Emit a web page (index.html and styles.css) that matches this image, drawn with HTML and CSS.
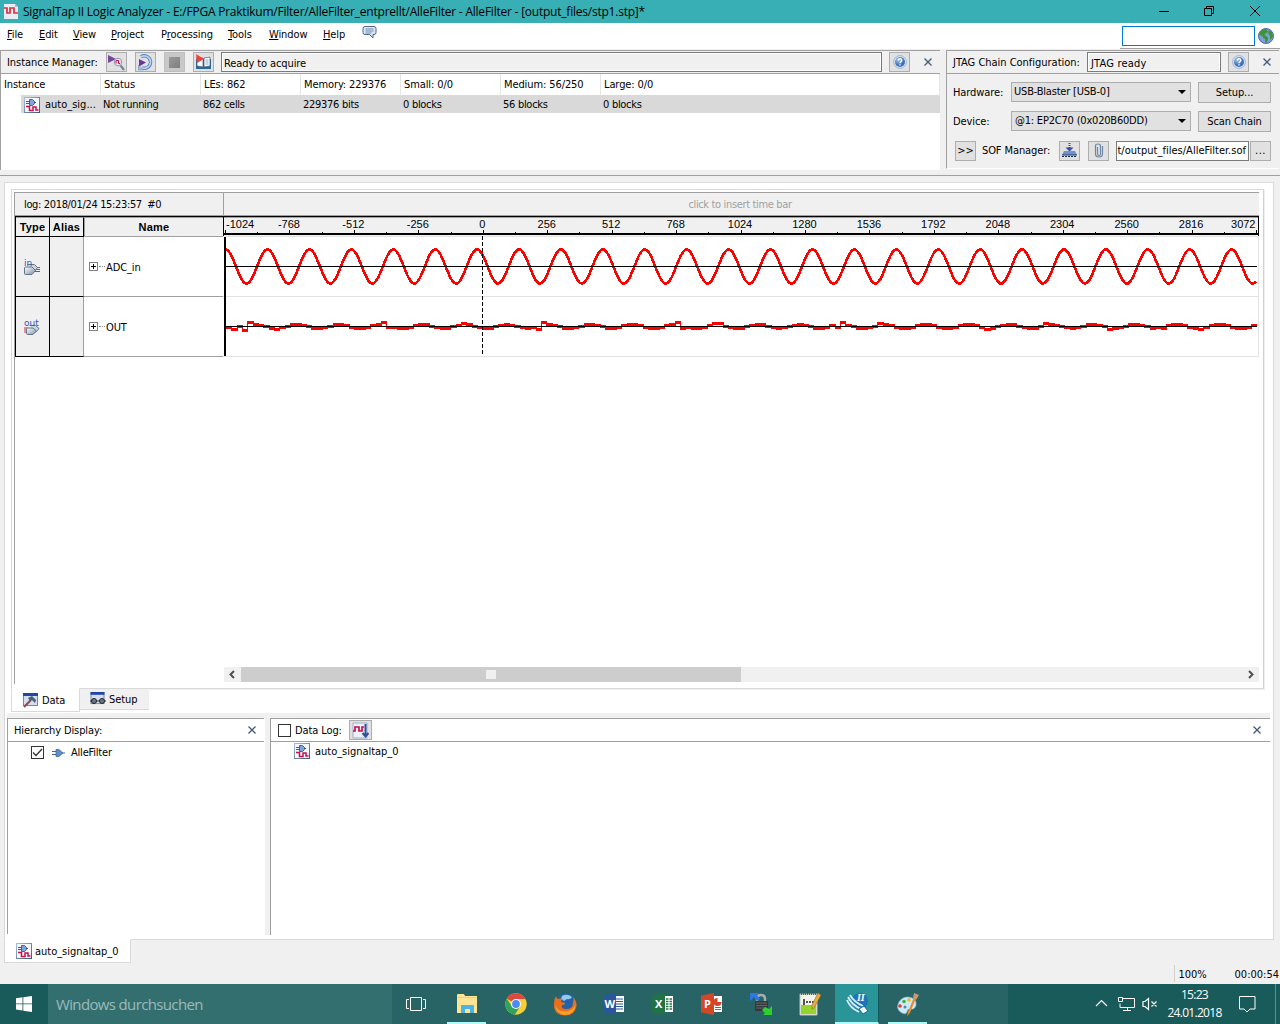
FILE: index.html
```html
<!DOCTYPE html>
<html lang="en">
<head>
<meta charset="utf-8">
<title>SignalTap II Logic Analyzer</title>
<link rel="stylesheet" href="styles.css">
</head>
<body>
<svg class="defs" width="0" height="0">
  <defs>
    <linearGradient id="metal" x1="0" y1="0" x2="1" y2="1"><stop offset="0" stop-color="#fff"/><stop offset="1" stop-color="#7d8ea3"/></linearGradient>
    <linearGradient id="frame" x1="0" y1="0" x2="1" y2="1"><stop offset="0" stop-color="#a5bfdf"/><stop offset="1" stop-color="#3f5878"/></linearGradient>
    <radialGradient id="ball" cx=".35" cy=".3"><stop offset="0" stop-color="#a9c8ea"/><stop offset="1" stop-color="#3f72b8"/></radialGradient>
    <symbol id="tap" viewBox="0 0 16 16"><rect x=".5" y=".5" width="15" height="15" fill="#f4f7fb" stroke="url(#frame)"/><path d="M2 4.500h4M2 6.500h4M10 5.500h2" stroke="#3559a8"/><path d="M5.500 2.500h3l2 2v2l-2 2h-3z" fill="#7fa3df" stroke="#27498f" stroke-width=".8"/><path d="M2 9.500h3.500v4H9v-3.500h3v3h2.500" fill="none" stroke="#c8104c" stroke-width="1.500"/></symbol>
    <symbol id="help" viewBox="0 0 14 14"><circle cx="7" cy="7" r="6.400" fill="#dbe7f5" stroke="#8aa9d0" stroke-width=".8"/><circle cx="7" cy="7" r="5" fill="url(#ball)"/><path d="M5.200 5.500c0-2.400 3.700-2.200 3.600 0C8.700 6.800 7 6.700 7 8.200M7 9.200v1.400" fill="none" stroke="#fff" stroke-width="1.400"/></symbol>
    <symbol id="close" viewBox="0 0 8 8"><path d="M.5.5l7 7M7.500.5l-7 7" fill="none" stroke="#42597a" stroke-width="1.300"/></symbol>
    <symbol id="win" viewBox="0 0 15 14"><rect x=".5" y=".5" width="14" height="12" fill="#d3def0" stroke="#6d87b8"/><path d="M0 0h15v3H0z" fill="#2347a0"/></symbol>
  </defs>
</svg>

<header class="titlebar">
  <svg class="app-icon" width="14" height="15" viewBox="0 0 14 15"><path d="M0 0h11l3 3v12H0z" fill="#e9ecf5"/><path d="M11 0v3h3z" fill="#aab4d0"/><path d="M0 4h3v5h3V4h4v5h4" fill="none" stroke="#e0313d" stroke-width="1.700"/></svg>
  <span class="title">SignalTap II Logic Analyzer - E:/FPGA Praktikum/Filter/AlleFilter_entprellt/AlleFilter - AlleFilter - [output_files/stp1.stp]*</span>
  <svg class="win-controls" width="104" height="12" viewBox="0 0 104 12" fill="none" stroke="#000"><path d="M0 6.500h10M45.500 3.500h7v7h-7zM47.500 3v-1.500h7v7H53M91 1l10 10M101 1L91 11"/></svg>
</header>

<nav class="menubar">
  <span class="m1"><u>F</u>ile</span><span class="m2"><u>E</u>dit</span><span class="m3"><u>V</u>iew</span><span class="m4"><u>P</u>roject</span><span class="m5">P<u>r</u>ocessing</span><span class="m6"><u>T</u>ools</span><span class="m7"><u>W</u>indow</span><span class="m8"><u>H</u>elp</span>
  <svg class="bubble" width="15" height="13" viewBox="0 0 15 13"><path d="M3 .5h9q2 0 2 2v4q0 2-2 2h-1v3.500L7.500 8.500H3q-2 0-2-2v-4q0-2 2-2z" fill="#dce8f8" stroke="#4a648c"/><path d="M3.500 3h8M3.500 5h8M3.500 7h6" stroke="#54709b" stroke-width=".8"/></svg>
  <div class="search"><div class="search-box"></div>
    <svg width="16" height="16" viewBox="0 0 16 16"><circle cx="8" cy="8" r="7.500" fill="#7ba0dc" stroke="#4a66a5"/><path d="M8 1C4 1 2 4 1.200 7l3 1 1 2 2 1 0 4 2-1 1-4-2-2-2-1 2-2 2-1zM11 2l-1 3 2 3 0 4 2-2 1-3-1-3z" fill="#3f9435"/></svg></div>
</nav>

<section class="docks">
  <div class="instance-dock">
    <div class="dock-head">
      <span class="lbl-im">Instance Manager:</span>
      <button class="tool"><svg width="17" height="17" viewBox="0 0 17 17"><path d="M0 1l8 4-8 4z" fill="#7545a0"/><circle cx="10" cy="8" r="3.800" fill="#f3dfe6" stroke="#8a9db3"/><path d="M8 9.500V6.500h2.500v3H12" fill="none" stroke="#c8104c"/><path d="M12.500 11.500l3.500 4.500" stroke="#73849c" stroke-width="2.200"/></svg></button>
      <button class="tool"><svg width="17" height="17" viewBox="0 0 17 17"><path d="M4 2.800a6.200 6.200 0 1 1 1 11" fill="none" stroke="#5980b9" stroke-width="3.400"/><path d="M4 2.800a6.200 6.200 0 1 1 1 11" fill="none" stroke="#b4d2f2" stroke-width="1.800"/><path d="M2 5l7 3.500-7 4z" fill="#6b3699"/><path d="M1.500 11v5h5z" fill="#9fc1ea" stroke="#5980b9" stroke-width=".5"/></svg></button>
      <button class="tool off"><i class="stop"></i></button>
      <button class="tool"><svg width="17" height="17" viewBox="0 0 17 17"><path d="M1 5h15v10H1z" fill="#27699b"/><path d="M2 3l6 1v9l-6-1zM9 4l6-1v9l-6 1z" fill="#fff" stroke="#335a80" stroke-width=".7"/><path d="M10.500 6h3M10.500 8h3M10.500 10h3" stroke="#8ba3bb"/><path d="M1 0l8 5-7 4z" fill="#f14242"/></svg></button>
      <div class="status-box">Ready to acquire</div>
      <button class="tool help"><svg width="14" height="14"><use href="#help"/></svg></button>
      <svg class="x" width="8" height="8"><use href="#close"/></svg>
    </div>
    <div class="inst-row inst-cols"><span>Instance</span><span>Status</span><span>LEs: 862</span><span>Memory: 229376</span><span>Small: 0/0</span><span>Medium: 56/250</span><span>Large: 0/0</span></div>
    <div class="inst-row inst-data"><span class="inst-name"><svg width="16" height="16"><use href="#tap"/></svg>auto_sig...</span><span>Not running</span><span>862 cells</span><span>229376 bits</span><span>0 blocks</span><span>56 blocks</span><span>0 blocks</span></div>
  </div>
  <div class="jtag-dock">
    <div class="dock-head">
      <span class="lbl-jtag">JTAG Chain Configuration:</span>
      <div class="status-box">JTAG ready</div>
      <button class="tool help"><svg width="14" height="14"><use href="#help"/></svg></button>
      <svg class="x" width="8" height="8"><use href="#close"/></svg>
    </div>
    <div class="jrow r1"><span class="jl">Hardware:</span><div class="combo">USB-Blaster [USB-0]<i></i></div><button class="btn">Setup...</button></div>
    <div class="jrow r2"><span class="jl">Device:</span><div class="combo dev">@1: EP2C70 (0x020B60DD)<i></i></div><button class="btn">Scan Chain</button></div>
    <div class="jrow r3"><button class="sq more">&gt;&gt;</button><span class="sof">SOF Manager:</span>
      <button class="sq"><svg width="17" height="17" viewBox="0 0 17 17"><path d="M8.500 1v6" stroke="#3448b0" stroke-width="2" stroke-dasharray="1 1"/><path d="M4.500 5.500h8l-4 4z" fill="#3448b0"/><path d="M3 9h11l2 4H1z" fill="#6f92c8"/><path d="M1 13h15" stroke="#263f6b"/><path d="M1 14.500h15" stroke="#1b2c46" stroke-dasharray="2 1"/></svg></button>
      <button class="sq clip"><svg width="10" height="15" viewBox="0 0 10 15" fill="none" stroke="#6c86a8" stroke-width="1.200"><path d="M3.500 4v7q0 1.500 1.500 1.500T6.500 11V3Q6.500 1 4 1T1.500 3v8q0 3 3.500 3t3.500-3V3"/></svg></button>
      <div class="sof-file"><span>t/output_files/AlleFilter.sof</span></div><button class="sq dots">...</button></div>
  </div>
</section>

<main class="workspace">
  <div class="data-frame">
    <div class="viewer">
      <div class="log-row"><span class="log">log: 2018/01/24 15:23:57&nbsp; #0</span><span class="timebar">click to insert time bar</span></div>
      <div class="grid">
        <div class="names">
          <div class="name-head"><b>Type</b><b>Alias</b><b>Name</b></div>
          <div class="name-row"><div class="type"><svg width="17" height="17" viewBox="0 0 17 17"><path d="M11 8.500h5M11 10.500h5M11 12.500h5" stroke="#e12b35"/><path d="M3.500 5.500h7l3 3-3 4" fill="#cbd5e0" stroke="#60758c"/><path d="M.5 9q0-1 1-1H8l3.500 3.500L8 15.500H1.500q-1 0-1-1z" fill="url(#metal)" stroke="#60758c"/><text x="0" y="7" class="io">in</text></svg></div><div class="alias"></div><div class="sig"><i class="plus"></i><i class="stem"></i><span>ADC_in</span></div></div>
          <div class="name-row"><div class="type"><svg width="17" height="17" viewBox="0 0 17 17"><path d="M0 9h4M0 11h4M0 13h4" stroke="#e12b35"/><path d="M5.500 6.500h6l3.500 3-3.500 4" fill="#cbd5e0" stroke="#60758c"/><path d="M2.500 10q0-1 1-1H9l3.500 3L9 15.500H3.500q-1 0-1-1z" fill="url(#metal)" stroke="#60758c"/><text x="0" y="7" class="io">out</text></svg></div><div class="alias"></div><div class="sig"><i class="plus"></i><i class="stem"></i><span>OUT</span></div></div>
        </div>
        <svg id="waves" class="waves" width="1036" height="142" viewBox="223 216 1036 142"></svg>
      </div>
      <div class="hscroll"><svg width="17" height="15" viewBox="0 0 17 15"><path d="M10 4L6.500 7.500 10 11" fill="none" stroke="#505050" stroke-width="2"/></svg><div class="thumb"><i></i></div><svg class="right" width="17" height="15" viewBox="0 0 17 15"><path d="M7 4l3.500 3.500L7 11" fill="none" stroke="#505050" stroke-width="2"/></svg></div>
    </div>
  </div>
  <div class="tabs">
    <div class="tab active"><svg width="15" height="15" viewBox="0 0 15 15"><use href="#win" width="15" height="14"/><path d="M1 14l7-7" stroke="#9b4636" stroke-width="2"/><path d="M5 5l4-2 4 4-1 3-3-3-2 1z" fill="#4b5f78"/></svg><span>Data</span></div>
    <div class="tab"><svg width="16" height="14" viewBox="0 0 16 14"><use href="#win" width="15" height="13"/><path d="M0 9h16" stroke="#333"/><circle cx="4" cy="9" r="2.500" fill="#6c7888" stroke="#222"/><circle cx="12" cy="9" r="2.500" fill="#6c7888" stroke="#222"/></svg><span>Setup</span></div>
  </div>
  <div class="panels">
    <section class="hier">
      <div class="panel-head"><span>Hierarchy Display:</span><svg class="x" width="8" height="8"><use href="#close"/></svg></div>
      <div class="hier-item"><i class="check"><svg width="11" height="11" viewBox="0 0 11 11"><path d="M1 5.500l3 3L10 2" fill="none" stroke="#333" stroke-width="1.300"/></svg></i><svg class="plug" width="13" height="8" viewBox="0 0 13 8"><path d="M0 2.500h5M0 5.500h5M10 4h3" stroke="#4a648c"/><path d="M4 .500h3L11 4 7 7.500H4z" fill="#5b8fd0" stroke="#3c5f94" stroke-width=".7"/></svg><span>AlleFilter</span></div>
    </section>
    <section class="datalog">
      <div class="panel-head"><i class="check"></i><span>Data Log:</span><button class="sq log-btn"><svg width="17" height="17" viewBox="0 0 17 17"><path d="M1 1h14v15H1z" fill="#edf2fa" stroke="#9bb0cf"/><path d="M1 9h2V5h4v4h3V5h2" fill="none" stroke="#c8104c" stroke-width="1.700"/><path d="M13.500 2v11M10.500 11l3 3.500 3-3.500" fill="none" stroke="#2e4e9e" stroke-width="2"/></svg></button><svg class="x" width="8" height="8"><use href="#close"/></svg></div>
      <div class="log-item"><svg width="16" height="16"><use href="#tap"/></svg><span>auto_signaltap_0</span></div>
    </section>
  </div>
</main>
<div class="file-tab"><svg width="16" height="16"><use href="#tap"/></svg><span>auto_signaltap_0</span></div>
<div class="statusbar"><span class="zoom">100%</span><span class="time">00:00:54</span></div>

<footer class="taskbar">
  <div class="start"><svg width="16" height="16" viewBox="0 0 16 16" fill="#fff"><path d="M0 2.300L6.500 1.300v6.200H0zM7.300 1.200L16 0v7.500H7.300zM0 8.300h6.500v6.200L0 13.600zM7.300 8.300H16V16l-8.700-1.300z"/></svg></div>
  <div class="win-search">Windows durchsuchen</div>
  <div class="apps">
    <div class="app view"><svg width="20" height="14" viewBox="0 0 20 14" fill="none" stroke="#fff"><path d="M4.500.5h11v13h-11zM3 2.500H.5v9H3M17 2.500h2.500v9H17"/></svg></div>
    <div class="app open"><svg width="22" height="22" viewBox="0 0 22 22"><path d="M1 2q0-1 1-1h6l1 2h12v17H1z" fill="#ffe493"/><path d="M1 4h20v1H1z" fill="#f4cf6c"/><path d="M5 20v-7q0-1 1-1h11q1 0 1 1v7h-4v-4H9v4z" fill="#4bb3ea"/></svg></div>
    <div class="app"><svg width="22" height="22" viewBox="0 0 22 22"><circle cx="11" cy="11" r="10.700" fill="#f9cf36"/><path d="M11 11L1.700 5.600A10.700 10.700 0 0 1 20.500 6H11z" fill="#dc4a3d"/><path d="M1.700 5.600A10.700 10.700 0 0 0 10 21.600l5-8.100-8 0z" fill="#2da45a"/><circle cx="11" cy="11" r="5" fill="#fff"/><circle cx="11" cy="11" r="3.900" fill="#4a8af4"/></svg></div>
    <div class="app"><svg width="24" height="23" viewBox="0 0 24 23"><circle cx="13" cy="10" r="9.500" fill="#2461a8"/><path d="M9 3q5-3 10 1-2 3-5 2l-3 2-3-2z" fill="#8ecbec"/><path d="M3 3q0 2 2 3 3-1 5 0-2 1-2 3l4 1q0 2-3 2-1 4 4 4 7 0 7-6 1-3 0-6 4 4 3.500 9Q22 22.500 12 22.500 1 22 1 12 1 6 3 3z" fill="#e8701c"/><path d="M2 12q3 7 11 6.500 7-1 9.500-7Q22 22 12 22 3 21 2 12z" fill="#f5a02b"/></svg></div>
    <div class="app"><svg width="22" height="22" viewBox="0 0 22 22"><path d="M11 3h10v16H11z" fill="#fff"/><path d="M13 6h7M13 8.500h7M13 11h7M13 13.500h7M13 16h7" stroke="#2b579a"/><path d="M0 2.500L13 0v22L0 19.500z" fill="#2b579a"/><text x="1.500" y="15" class="office">W</text></svg></div>
    <div class="app"><svg width="22" height="22" viewBox="0 0 22 22"><path d="M11 3h10v16H11z" fill="#fff"/><path d="M14 6h6M14 8.500h6M14 11h6M14 13.500h6M14 16h6" stroke="#217346" stroke-width="1.500" stroke-dasharray="2.500 1"/><path d="M0 2.500L13 0v22L0 19.500z" fill="#217346"/><text x="3" y="15" class="office">X</text></svg></div>
    <div class="app"><svg width="22" height="22" viewBox="0 0 22 22"><path d="M11 3h10v16H11z" fill="#fff"/><path d="M14 14.500h6M14 16.500h6" stroke="#d24726"/><path d="M16.500 5v4h4a4 4 0 1 1-4-4z" fill="#d24726"/><path d="M0 2.500L13 0v22L0 19.500z" fill="#d24726"/><text x="3" y="15" class="office">P</text></svg></div>
    <div class="app"><svg width="24" height="24" viewBox="0 0 24 24"><path d="M8 10V7q0-4 4-4t4 4v3" fill="none" stroke="#a8adb0" stroke-width="2.500"/><path d="M6 9h13v10H6z" fill="#34383a"/><path d="M7 11h11M7 13.500h11M7 16h11" stroke="#63686b"/><path d="M1 1h9L8 3l3 4-3 2-3-4-4 4z" fill="#2d78e8"/><path d="M23 14v9h-9l2-2-3-3 3-3 4 2z" fill="#2fd12e"/></svg></div>
    <div class="app"><svg width="22" height="24" viewBox="0 0 22 24"><path d="M1 2h17v21H1z" fill="#f2f5e9" stroke="#b8bfae"/><path d="M2 13h15v9H2z" fill="#94d52c"/><path d="M2 2h15" stroke="#555" stroke-width="2" stroke-dasharray="1 1"/><path d="M5 7v6M7 10h2M10 10h2M13 10h2" stroke="#222" stroke-width="1.500"/><path d="M19 1l3 2-7 13-2 1 0-4z" fill="#e8ae3c" stroke="#93672b" stroke-width=".6"/></svg></div>
    <div class="app current"><svg width="24" height="24" viewBox="0 0 24 24"><circle cx="15" cy="9" r="8" fill="#1e74b8"/><path d="M2 8q3 8 12 12M3 5q4 8 13 12M5 3q4 7 13 11" fill="none" stroke="#d6ecf8" stroke-width="1.800"/><path d="M14 17l5-3 4 5-5 3z" fill="#eef7fb" stroke="#1b679f"/><text x="12" y="9" class="two">II</text></svg></div>
    <div class="app open paint"><svg width="24" height="24" viewBox="0 0 24 24"><path d="M12 5q9 1 8 8-1 5-6 4-3 0-3 3-1 3-5 1Q-1 17 3 10q3-5 9-5z" fill="#cfe9f5" stroke="#83b8cf" stroke-width=".7"/><circle cx="4" cy="14" r="1.800" fill="#df3c32"/><circle cx="8" cy="9.500" r="1.800" fill="#44ad3f"/><circle cx="13" cy="8" r="1.800" fill="#f3b927"/><circle cx="9" cy="15" r="1.500" fill="#3f8fb0"/><path d="M20 6l-6 15-3 3 1-4 6-15z" fill="#e48b35"/><path d="M18 1l5 2-3 5-3-2z" fill="#c99a6d"/></svg></div>
  </div>
  <div class="tray">
    <svg width="64" height="16" viewBox="0 0 64 16" fill="none" stroke="#fff"><path d="M1 10l5.500-5.500L12 10" stroke-width="1.200"/><path d="M28 2.500h11.500v9h-14.500v-4M32.500 12v2M28 14.500h8M23.500 1.500h4v4h-4z"/><path d="M48 5.500h2l3.500-3v11l-3.500-3H48zM56.500 5.500l5 5M61.500 5.500l-5 5" stroke-width="1.200"/></svg>
    <div class="clock"><span>15:23</span><span>24.01.2018</span></div>
    <svg class="action" width="17" height="17" viewBox="0 0 17 17" fill="none" stroke="#fff"><path d="M.5.5h15.500v12.500h-5l-3 3-3-3H.5z"/></svg>
  </div>
</footer>
<script src="waves.js"></script>
</body>
</html>
```
FILE: styles.css
```css
* { box-sizing: border-box; }
body { margin: 0; width: 1280px; height: 1024px; overflow: hidden; background: #f0f0f0; color: #000; font: 11px/14px "DejaVu Sans Condensed", "DejaVu Sans", sans-serif; letter-spacing: -0.1px; display: flex; flex-direction: column; white-space: nowrap; }
svg { display: block; flex: none; }
.defs { position: absolute; }
button { font: inherit; letter-spacing: inherit; color: inherit; padding: 0; border: 1px solid #adadad; background: #e1e1e1; display: flex; align-items: center; justify-content: center; flex: none; }
.x { margin-left: auto; }

.titlebar { height: 23px; flex: none; background: #37afb5; display: flex; align-items: center; padding-left: 4px; }
.title { margin-left: 5px; font: 12px/16px "Open Sans", "Noto Sans", sans-serif; letter-spacing: -0.225px; }
.win-controls { margin: 0 17px 2px auto; }

.menubar { height: 26px; flex: none; background: #fff; display: flex; }
.menubar span { flex: none; padding-top: 5px; }
.m1 { width: 32px; margin-left: 7px; } .m2 { width: 34px; } .m3 { width: 38px; } .m4 { width: 50px; } .m5 { width: 67px; } .m6 { width: 41px; } .m7 { width: 54px; } .m8 { width: 39px; }
.menubar .bubble { margin-top: 3px; }
.search { margin-left: auto; width: 160px; border-bottom: 1px solid #a0a0a0; display: flex; padding: 3px 0 0 2px; gap: 3px; }
.search-box { width: 133px; height: 20px; border: 1px solid #0078d7; }
.search svg { margin-top: 2px; }

.docks { height: 127px; flex: none; display: flex; gap: 6px; padding-top: 1px; border-bottom: 1px solid #a0a0a0; }
.instance-dock { width: 940px; height: 120px; border-left: 1px solid #a0a0a0; border-top: 1px solid #a0a0a0; background: #fff; }
.jtag-dock { width: 333px; height: 119px; border-left: 1px solid #a0a0a0; border-top: 1px solid #a0a0a0; border-bottom: 1px solid #fff; }
.dock-head { height: 23px; border-bottom: 1px solid #a0a0a0; background: #f0f0f0; display: flex; align-items: center; }
.lbl-im { width: 98px; padding: 1px 0 0 6px; letter-spacing: -0.05px; }
.lbl-jtag { width: 140px; padding: 1px 0 0 6px; letter-spacing: -0.02px; }
.tool { width: 21px; height: 20px; margin: 0 1px 0 7px; }
.tool + .tool { margin-left: 7px; }
.tool.off { background: #c8c8c8; border-color: #bfbfbf; }
.stop { width: 11px; height: 11px; background: linear-gradient(135deg, #9a9a9a, #7f7f7f); }
.status-box { height: 20px; border: 1px solid #7a7a7a; outline: 1px solid #fff; outline-offset: -2px; line-height: 21px; padding-left: 2px; }
.instance-dock .status-box { width: 661px; margin-left: 6px; }
.jtag-dock .status-box { width: 134px; padding-left: 3px; letter-spacing: .2px; }
.dock-head .help { margin: 0 0 0 7px; }
.x { margin-right: 8px; }
.inst-row { display: grid; grid-template-columns: 100px repeat(5, 100px) 1fr; }
.inst-cols { height: 21px; line-height: 22px; }
.inst-cols span { border-right: 1px solid #e5e5e5; padding-left: 3px; }
.inst-data { height: 18px; line-height: 20px; margin-left: 20px; background: #d9d9d9; grid-template-columns: 79px repeat(5, 100px) 1fr; letter-spacing: -0.28px; }
.inst-data span { padding-left: 3px; }
.inst-name { display: flex; gap: 5px; align-items: center; letter-spacing: 0; }

.jrow { display: flex; align-items: center; padding-left: 6px; margin-top: 8px; }
.jl { width: 58px; padding-top: 1px; }
.combo { width: 180px; height: 20px; border: 1px solid #adadad; background: #e1e1e1; display: flex; align-items: center; padding: 0 4px 0 2px; margin-right: 7px; margin-bottom: 1px; letter-spacing: -0.2px; }
.combo.dev { padding-left: 3px; }
.combo i { margin-left: auto; border: 4px solid transparent; border-top: 4px solid #000; border-bottom: 0; }
.btn { width: 73px; height: 21px; padding-top: 1px; }
.sq { width: 21px; height: 20px; }
.more { margin-left: 2px; }
.r3 { height: 21px; }
.sof { width: 77px; margin-left: 6px; padding-top: 1px; }
.clip { margin-left: 8px; }
.sof-file { width: 133px; height: 20px; margin-left: 7px; border: 1px solid #7a7a7a; background: #fff; overflow: hidden; display: flex; align-items: center; justify-content: flex-end; padding: 1px 2px 0 0; letter-spacing: 0.02px; }
.dots { margin-left: 1px; letter-spacing: .5px; }

.workspace { width: 1270px; height: 758px; margin: 6px 0 0 4px; border: 1px solid #d9d9d9; background: #fff; flex: none; padding: 6px 0 0 2px; }
.data-frame { width: 1253px; height: 500px; margin-left: 4px; border: 1px solid #d9d9d9; border-right-color: #d0d0d0; padding: 2px 0 0 2px; box-shadow: 1px 1px 0 #f0f0f0; }
.viewer { width: 1245px; height: 492px; border-left: 1px solid #a0a0a0; border-top: 1px solid #a0a0a0; display: flex; flex-direction: column; }
.log-row { height: 23px; flex: none; background: #f0f0f0; display: flex; line-height: 23px; border-bottom: 1px solid #a0a0a0; letter-spacing: -0.35px; }
.log { width: 209px; padding-left: 9px; border-right: 1px solid #a0a0a0; }
.timebar { flex: 1; text-align: center; color: #a0a0a0; padding-right: 3px; }
.grid { display: flex; height: 142px; flex: none; }
.names { width: 208px; height: 141px; border-left: 1px solid #000; border-top: 1px solid #000; }
.name-head { display: grid; grid-template-columns: 34px 34px 1fr; height: 20px; text-align: center; font: bold 11px/18px "Liberation Sans", sans-serif; letter-spacing: .2px; background: #f0f0f0; }
.name-head b { border-right: 1px solid #000; border-bottom: 1px solid #000; border-top: 1px solid #a0a0a0; }
.name-head b:last-child { border-right: 0; border-bottom-color: #a0a0a0; border-left: 1px solid #a0a0a0; }
.name-row { display: grid; grid-template-columns: 34px 34px 1fr; height: 60px; }
.type, .alias { background: #f0f0f0; border-right: 1px solid #000; border-bottom: 1px solid #000; }
.alias { border-right: 1px solid #a0a0a0; }
.type { display: flex; align-items: center; justify-content: center; padding-top: 2px; }
.io { font: 9px "DejaVu Sans", sans-serif; fill: #2f55b5; letter-spacing: 0; }
.sig { display: flex; align-items: center; padding-left: 5px; border-bottom: 1px solid #a0a0a0; }
.plus { width: 9px; height: 9px; border: 1px solid #808080; background: linear-gradient(#000, #000) center / 5px 1px no-repeat, linear-gradient(#000, #000) center / 1px 5px no-repeat; }
.stem { width: 6px; border-top: 1px dotted #909090; margin: 0 1px; }
.sig span { padding-top: 2px; }
.axis { font: 11px "Liberation Sans", sans-serif; letter-spacing: 0; fill: #000; }
.hscroll { margin: auto 4px 2px 209px; width: 1035px; height: 15px; background: #f0f0f0; display: flex; flex: none; }
.thumb { width: 500px; background: #cdcdcd; display: flex; align-items: center; justify-content: center; }
.thumb i { width: 10px; height: 9px; background: #f0f0f0; }
.hscroll .right { margin-left: auto; }

.tabs { display: flex; height: 24px; padding-left: 4px; margin-top: -1px; align-items: flex-start; position: relative; }
.tab { display: flex; align-items: center; height: 22px; width: 69px; padding-left: 10px; gap: 3px; background: #f0f0f0; border-bottom: 1px solid #d9d9d9; border-top: 1px solid #d9d9d9; }
.tab span { padding-top: 1px; }
.tab.active { height: 24px; width: 69px; padding-left: 11px; gap: 4px; background: #fff; border: 1px solid #d9d9d9; border-top-color: #fff; }
.panels { height: 221px; margin-top: 1px; display: flex; border-top: 5px solid #f0f0f0; width: 1263px; }
.hier { width: 257px; height: 216px; border-left: 1px solid #a0a0a0; border-top: 1px solid #a0a0a0; }
.datalog { flex: 1; height: 217px; border-left: 1px solid #a0a0a0; border-top: 1px solid #a0a0a0; box-shadow: -5px 0 0 #f0f0f0; margin-left: 6px; }
.panel-head { height: 23px; border-bottom: 1px solid #a0a0a0; display: flex; align-items: center; padding-left: 6px; }
.panel-head span { padding-top: 1px; }
.datalog .x { margin-right: 9px; }
.check { width: 13px; height: 13px; border: 1px solid #333; background: #fff; flex: none; }
.hier-item { display: flex; align-items: center; padding: 3px 0 0 23px; letter-spacing: -0.2px; }
.hier-item span { padding-top: 1px; }
.plug { margin: 0 6px 0 8px; }
.datalog .panel-head { padding-left: 7px; }
.datalog .panel-head span { margin-left: 4px; width: 54px; }
.log-btn { width: 23px; height: 20px; }
.log-item { display: flex; align-items: center; padding: 1px 0 0 23px; gap: 5px; letter-spacing: -0.03px; }
.log-item span, .file-tab span { padding-top: 2px; }
.file-tab { width: 127px; height: 24px; margin: -1px 0 0 4px; flex: none; background: #fff; border: 1px solid #d9d9d9; border-top-color: #fff; display: flex; align-items: center; gap: 3px; padding-left: 11px; position: relative; letter-spacing: -0.03px; }
.statusbar { flex: 1; display: flex; align-items: flex-end; justify-content: flex-end; letter-spacing: -0.05px; }
.zoom { width: 61px; height: 17px; margin-bottom: 2px; border-left: 1px solid #d0d0d0; padding: 3px 0 0 4px; }
.time { height: 17px; margin: 0 1px 0 0; padding-top: 1px; letter-spacing: 0; }

.taskbar { height: 40px; flex: none; display: flex; background: #195a5b; color: #fff; font-family: "Open Sans", sans-serif; }
.start { width: 48px; display: flex; align-items: center; justify-content: center; }
.win-search { width: 344px; background: #346f70; color: #9bbaba; font-size: 15px; line-height: 41px; padding-left: 8px; letter-spacing: -.64px; }
.apps { width: 616px; background: #286466; display: flex; }
.app { width: 49px; height: 40px; display: flex; align-items: center; justify-content: center; flex: none; }
.app.view { width: 50px; margin-right: 1px; padding-right: 2px; }
.app.open { border-bottom: 2px solid #adfbfb; width: 39px; margin: 0 5px 0 4px; padding-top: 1px; }
.app.current { width: 44px; margin-left: 1px; background: #2a9599; border-bottom: 2px solid #adfbfb; border-right: 1px solid #145559; padding-top: 1px; }
.app.paint { margin: 0 0 0 9px; }
.office { font: bold 11px "Open Sans", sans-serif; fill: #fff; letter-spacing: 0; }
.two { font: italic bold 10px "Liberation Serif", serif; fill: #fff; }
.tray { margin-left: auto; width: 186px; display: flex; align-items: center; border-right: 1px solid #5e9090; margin-right: 4px; font-size: 12px; letter-spacing: -.7px; }
.tray > svg { margin-left: 5px; }
.clock { width: 67px; display: flex; flex-direction: column; line-height: 18px; text-align: center; padding-left: 4px; }
.tray .action { margin-left: 13px; }
```
FILE: waves.js
```js
const svg = document.getElementById('waves');
const NS = 'http://www.w3.org/2000/svg';

function add(tag, attrs, text) {
  const el = document.createElementNS(NS, tag);
  for (const key in attrs) el.setAttribute(key, attrs[key]);
  if (text !== undefined) el.textContent = text;
  svg.appendChild(el);
}
function rect(x, y, width, height, fill) {
  add('rect', { x, y, width, height, fill, 'shape-rendering': 'crispEdges' });
}

// Ruler
rect(223, 216, 1036, 20, '#f0f0f0');
rect(223, 216, 1036, 1, '#000');
rect(223, 217, 1035, 1, '#a0a0a0');
rect(223, 216, 1, 20, '#000');
rect(1258, 216, 1, 20, '#000');
rect(224, 233, 1034, 2, '#000');
for (let i = 0; i <= 32; i++) {
  const x = Math.round(225 + i * 32.22);
  rect(x, i % 2 ? 232 : 230, 1, i % 2 ? 1 : 3, '#000');
}
for (let i = 0; i <= 16; i++) {
  const value = String(-1024 + i * 256);
  const x = i === 0 ? 226 : i === 16 ? 1255.5 : 224.5 + i * 64.44;
  add('text', { x, y: 228, class: 'axis', 'text-anchor': i === 0 ? 'start' : i === 16 ? 'end' : 'middle' }, value);
}

// Row separators
for (const y of [236, 296, 356]) rect(223, y, 1036, 1, '#e3e3e3');
rect(1258, 236, 1, 121, '#e3e3e3');

// Analog trace of ADC_in
let path = '';
for (let x = 226; x <= 1256; x++) {
  const y = 266.5 - 17 * Math.cos((x - 225.6) / 41.92 * 2 * Math.PI);
  path += (path ? 'L' : 'M') + x + ' ' + y.toFixed(1);
}
add('path', { d: path, fill: 'none', stroke: '#f00', 'stroke-width': 2.6, 'shape-rendering': 'crispEdges' });

// Stepped trace of OUT; single samples deviate from the regular swing
const spikes = { 1: -3, 2: 0, 3: -4, 4: 4, 5: 2, 9: -3, 29: 4, 30: -1, 44: 3, 58: -3, 59: 4, 84: 4, 85: -2, 91: 3, 92: 3, 113: 1, 114: -1, 115: 4, 122: 3, 142: -3, 153: 3, 165: -3, 173: -2, 174: -1, 175: -2, 182: -3 };
const step = 5.34;
let previous = null;
for (let i = 0; i < 193; i++) {
  const x = 226 + i * step;
  const phase = (x + step / 2 - 339) / 41.9 * 2 * Math.PI;
  const level = i in spikes ? spikes[i] : Math.round(2 * Math.cos(phase));
  const left = Math.round(x);
  const right = Math.min(1257, Math.round(x + step) + 1);
  if (previous !== null) rect(left, 325 - Math.max(level, previous), 1, Math.abs(level - previous) + 3, '#f00');
  rect(left, 325 - level, right - left, 3, '#f00');
  previous = level;
}

// Zero lines, left boundary and trigger position
rect(224, 266, 1033, 1, '#000');
rect(224, 326, 1033, 1, '#000');
rect(224, 237, 2, 119, '#000');
for (let y = 236; y < 356; y += 6) rect(482, y, 1, 4, '#000');
```
